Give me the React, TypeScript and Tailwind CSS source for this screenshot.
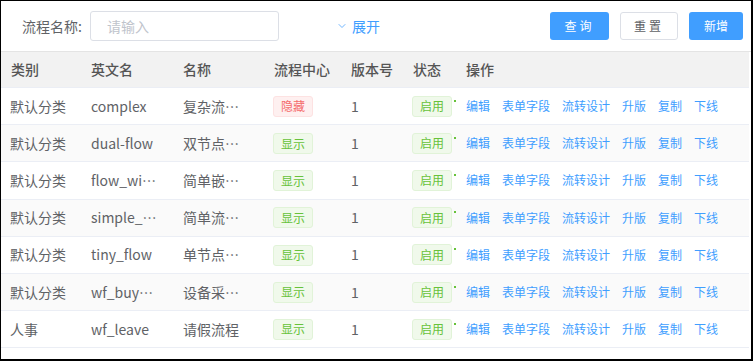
import React from "react";
import { ChevronDown } from "lucide-react";

type Row = { cat: string; code: string; cut?: boolean; name: string; hidden?: boolean };

const rows: Row[] = [
  { cat: "默认分类", code: "complex", name: "复杂流…", hidden: true },
  { cat: "默认分类", code: "dual-flow", name: "双节点…" },
  { cat: "默认分类", code: "flow_wi", cut: true, name: "简单嵌…" },
  { cat: "默认分类", code: "simple_", cut: true, name: "简单流…" },
  { cat: "默认分类", code: "tiny_flow", name: "单节点…" },
  { cat: "默认分类", code: "wf_buy", cut: true, name: "设备采…" },
  { cat: "人事", code: "wf_leave", name: "请假流程" },
];

const actions = ["编辑", "表单字段", "流转设计", "升版", "复制", "下线"];

const StatusTag = ({ hidden }: { hidden?: boolean }) =>
  hidden ? (
    <span className="inline-flex items-center h-[21px] px-[7px] text-[12px] rounded-[3px] border border-[#fde2e2] bg-[#fef0f0] text-[#f56c6c]">隐藏</span>
  ) : (
    <span className="inline-flex items-center h-[21px] px-[7px] text-[12px] rounded-[3px] border border-[#e1f3d8] bg-[#f0f9eb] text-[#67c23a]">显示</span>
  );

export default function App() {
  return (
    <div
      className="w-[753px] h-[361px] bg-white border border-black border-r-2 border-b-2 overflow-hidden text-[14px] text-[#606266]"
      style={{ fontFamily: '"Noto Sans CJK SC", "Noto Sans", sans-serif' }}
    >
      {/* search bar */}
      <div className="h-[51px] flex items-center pl-[21px] pr-[8px] border-b border-[#e4e4e4]">
        <span className="text-[14px] text-[#606266]">流程名称:</span>
        <div className="ml-[8px] w-[189px] h-[30px] border border-[#dcdfe6] rounded-[3px] flex items-center pl-[16px] text-[#c0c4cc] text-[14px]">请输入</div>
        <div className="ml-[57px] flex items-center text-[#409eff] text-[14px]">
          <ChevronDown size={12} strokeWidth={1.5} />
          <span className="ml-[4px]">展开</span>
        </div>
        <div className="ml-auto flex items-center gap-[11px] text-[12px]">
          <button className="w-[59px] h-[28px] rounded-[3px] bg-[#409eff] text-white tracking-[3px]">查询</button>
          <button className="w-[58px] h-[28px] rounded-[3px] border border-[#dcdfe6] bg-white text-[#606266] tracking-[3px]">重置</button>
          <button className="w-[54px] h-[28px] rounded-[3px] bg-[#409eff] text-white">新增</button>
        </div>
      </div>

      {/* table */}
      <div className="pr-[2px]">
        <div className="flex h-[36px] items-center bg-[#f2f2f2] text-[#555] font-medium border-b border-[#ebeef5]">
          <div className="w-[80px] pl-[10px]">类别</div>
          <div className="w-[92px] pl-[10px]">英文名</div>
          <div className="w-[91px] pl-[10px]">名称</div>
          <div className="w-[77px] pl-[10px]">流程中心</div>
          <div className="w-[62px] pl-[10px]">版本号</div>
          <div className="w-[53px] pl-[10px]">状态</div>
          <div className="flex-1 pl-[10px]">操作</div>
        </div>
        {rows.map((r, i) => (
          <div
            key={r.code}
            className={`flex h-[37.2px] items-center border-b border-[#ebeef5] ${i % 2 === 1 ? "bg-[#fafafa]" : "bg-white"}`}
          >
            <div className="w-[80px] pl-[9px]">{r.cat}</div>
            <div className="w-[92px] pl-[10px] flex items-center">
              <span>{r.code}</span>
              {r.cut && <span lang="zh-CN">…</span>}
            </div>
            <div className="w-[91px] pl-[10px]">{r.name}</div>
            <div className="w-[77px] pl-[9px]">
              <StatusTag hidden={r.hidden} />
            </div>
            <div className="w-[62px] pl-[10px]">1</div>
            <div className="w-[53px] pl-[9px] flex items-start">
              <span className="inline-flex items-center h-[21px] px-[7px] text-[12px] rounded-[3px] border border-[#e1f3d8] bg-[#f0f9eb] text-[#67c23a]">启用</span>
              <span className="ml-[2px] mt-[4px] w-[2px] h-[2px] bg-[#67c23a]" />
            </div>
            <div className="flex-1 pl-[10px] flex items-center gap-[12px] text-[12px] text-[#409eff]">
              {actions.map((a) => (
                <span key={a}>{a}</span>
              ))}
            </div>
          </div>
        ))}
      </div>
    </div>
  );
}
